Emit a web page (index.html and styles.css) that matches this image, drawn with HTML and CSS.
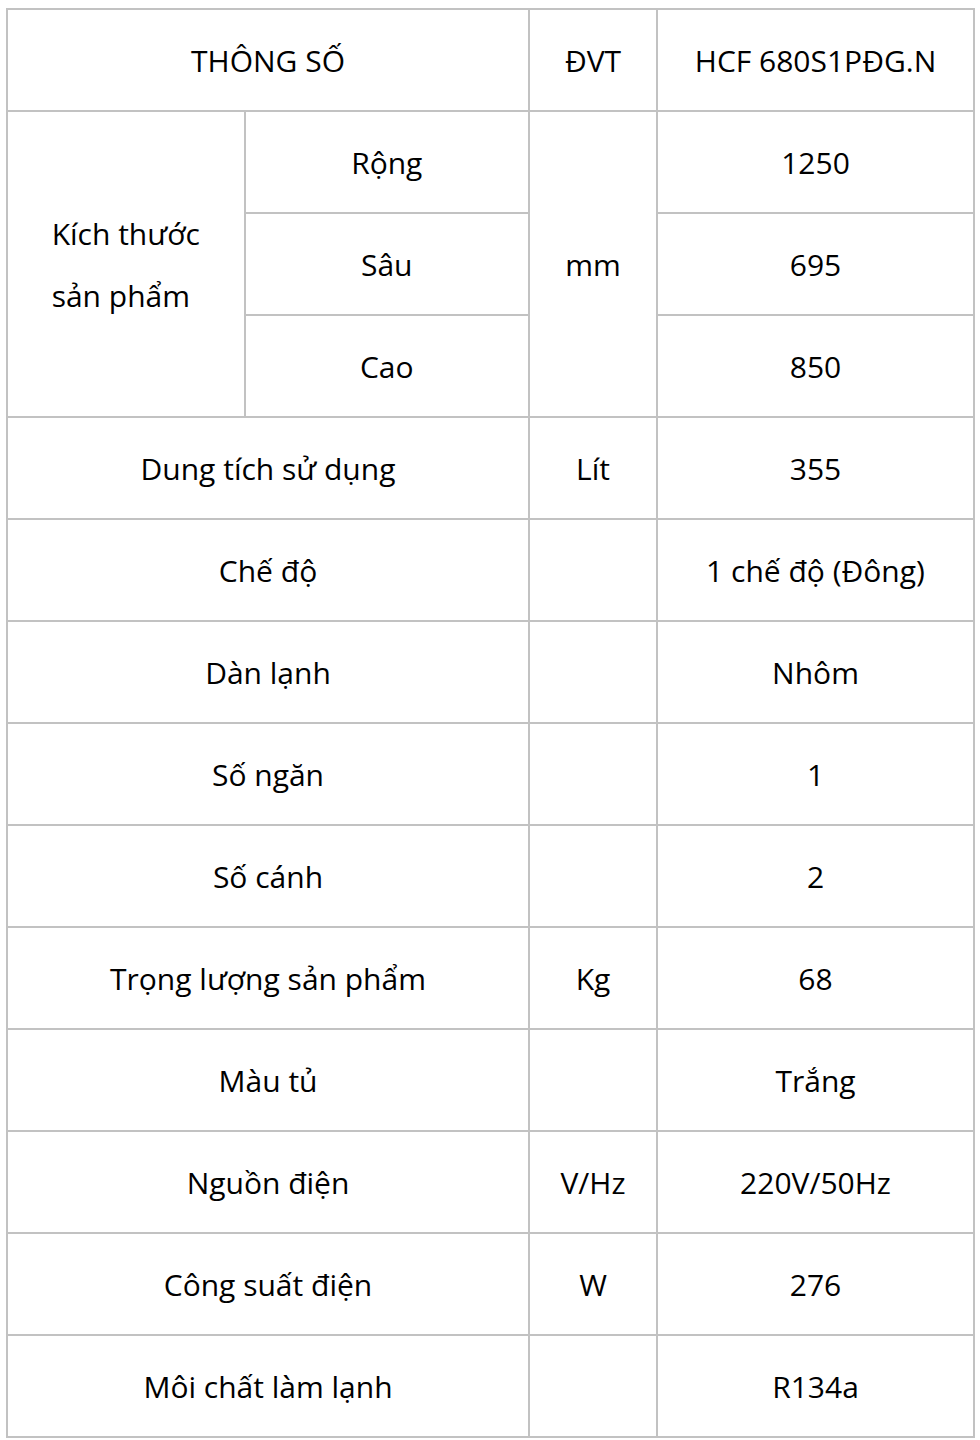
FILE: index.html
```html
<!DOCTYPE html>
<html lang="vi">
<head>
<meta charset="utf-8">
<title>Thông số</title>
<link rel="stylesheet" href="styles.css">
</head>
<body>
<table class="spec">
  <colgroup>
    <col class="c1"><col class="c2"><col class="c3"><col class="c4">
  </colgroup>
  <tbody>
    <tr><td colspan="2">THÔNG SỐ</td><td>ĐVT</td><td>HCF 680S1PĐG.N</td></tr>
    <tr><td rowspan="3"><span class="block">Kích thước<br>sản phẩm</span></td><td>Rộng</td><td rowspan="3">mm</td><td>1250</td></tr>
    <tr><td>Sâu</td><td>695</td></tr>
    <tr><td>Cao</td><td>850</td></tr>
    <tr><td colspan="2">Dung tích sử dụng</td><td>Lít</td><td>355</td></tr>
    <tr><td colspan="2">Chế độ</td><td></td><td>1 chế độ (Đông)</td></tr>
    <tr><td colspan="2">Dàn lạnh</td><td></td><td>Nhôm</td></tr>
    <tr><td colspan="2">Số ngăn</td><td></td><td>1</td></tr>
    <tr><td colspan="2">Số cánh</td><td></td><td>2</td></tr>
    <tr><td colspan="2">Trọng lượng sản phẩm</td><td>Kg</td><td>68</td></tr>
    <tr><td colspan="2">Màu tủ</td><td></td><td>Trắng</td></tr>
    <tr><td colspan="2">Nguồn điện</td><td>V/Hz</td><td>220V/50Hz</td></tr>
    <tr><td colspan="2">Công suất điện</td><td>W</td><td>276</td></tr>
    <tr><td colspan="2">Môi chất làm lạnh</td><td></td><td>R134a</td></tr>
  </tbody>
</table>
</body>
</html>
```
FILE: styles.css
```css
html, body {
  margin: 0;
  padding: 0;
  background: #ffffff;
}

body {
  font-family: "Open Sans", "Noto Sans", sans-serif;
  color: #000000;
}

.spec {
  border-collapse: collapse;
  table-layout: fixed;
  width: 967px;
  margin: 8px 0 0 6px;
  font-size: 30px;
  line-height: 62px;
}

.c1 { width: 237.5px; }
.c2 { width: 284.5px; }
.c3 { width: 128px; }
.c4 { width: 317px; }

.spec tr {
  height: 102px;
}

.spec td {
  border: 2px solid #c2c2c2;
  padding: 2px 0 0 0;
  text-align: center;
  vertical-align: middle;
}

.block {
  display: inline-block;
  text-align: left;
}
```
